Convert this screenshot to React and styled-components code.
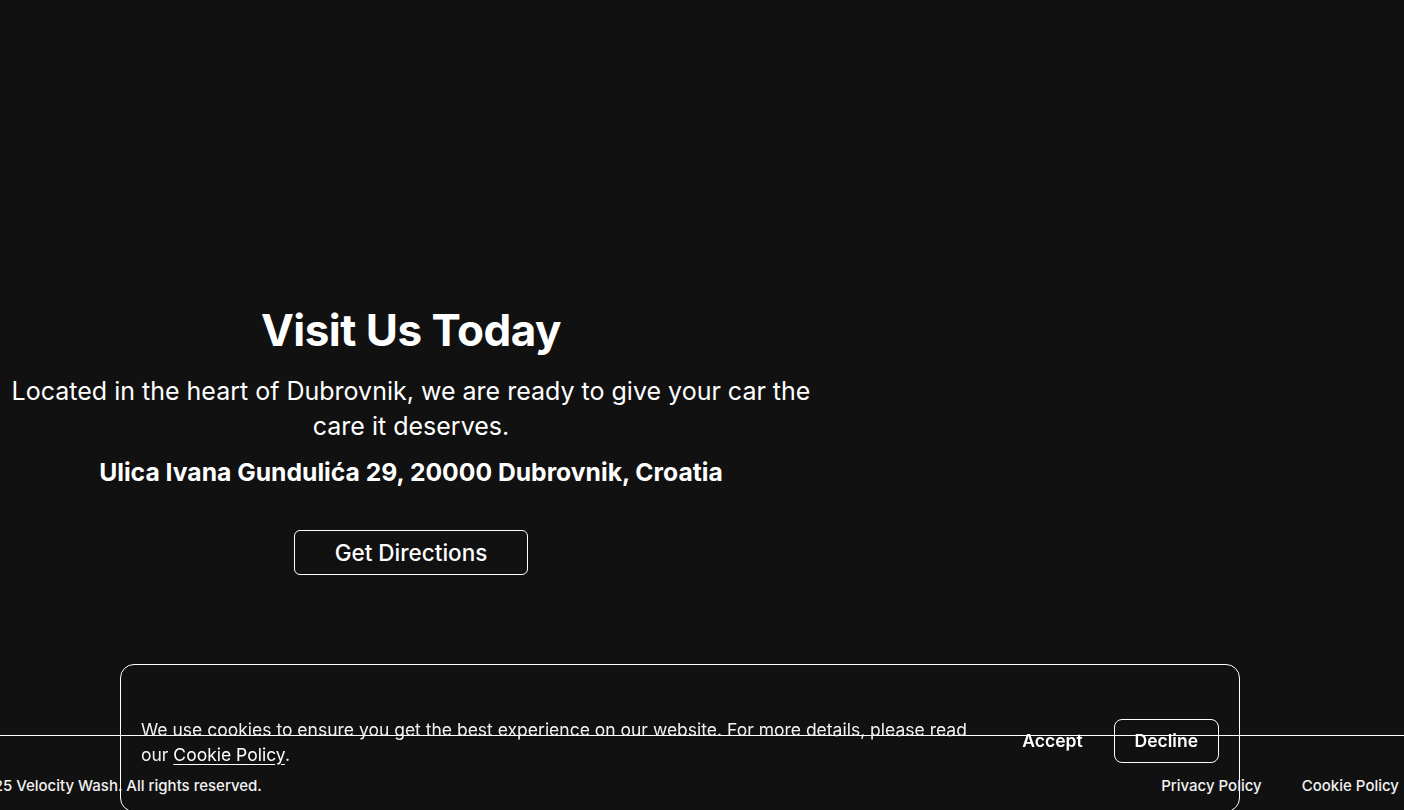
import styled, { createGlobalStyle } from "styled-components";

const GlobalStyle = createGlobalStyle`
  html, body {
    margin: 0;
    padding: 0;
    background: #111111;
    color: #fff;
    font-family: Inter, "Noto Sans", sans-serif;
    overflow: hidden;
  }
  * {
    box-sizing: border-box;
  }
`;

const Location = styled.section`
  display: grid;
  grid-template-columns: 822px 1fr;
  height: 735px;
`;

const Info = styled.div`
  display: flex;
  flex-direction: column;
  align-items: center;
  text-align: center;
  padding-top: 304px;
`;

const Title = styled.h2`
  margin: 0;
  font-size: 44px;
  line-height: 53px;
  font-weight: 700;
  letter-spacing: -0.5px;
`;

const Lead = styled.p`
  margin: 17px 0 0;
  max-width: 812px;
  font-size: 25px;
  line-height: 35px;
  font-weight: 400;
`;

const Address = styled.p`
  margin: 10px 0 0;
  font-size: 24.7px;
  line-height: 36px;
  font-weight: 700;
`;

const OutlineButton = styled.a`
  margin-top: 40px;
  display: inline-block;
  padding: 9px 40px;
  border: 1px solid #fff;
  border-radius: 6px;
  color: #fff;
  font-size: 22.5px;
  line-height: 25px;
  font-weight: 500;
  text-decoration: none;
`;

const Footer = styled.footer`
  border-top: 1px solid #fff;
  display: flex;
  justify-content: space-between;
  align-items: center;
  padding: 39px 5px 40px 0;
  font-size: 15px;
  line-height: 22px;
  font-weight: 500;
  color: #f2f2f2;
`;

const Copyright = styled.span`
  margin-left: -43px;
  white-space: nowrap;
`;

const FooterLinks = styled.nav`
  display: flex;
  gap: 40px;
  a {
    color: #f2f2f2;
    text-decoration: none;
  }
`;

const CookieBanner = styled.div`
  position: fixed;
  left: 120px;
  width: 1120px;
  top: 664px;
  height: 148px;
  border: 1px solid #fff;
  border-radius: 14px;
  display: flex;
  align-items: center;
  gap: 30px;
  padding: 0 20px;
`;

const CookieText = styled.p`
  flex: 1;
  margin: 8px 0 0;
  font-size: 17.5px;
  line-height: 25px;
  color: #f2f2f2;
  a {
    color: #fff;
    text-decoration: underline;
    text-underline-offset: 3px;
  }
`;

const CookieActions = styled.div`
  display: flex;
  gap: 10px;
  align-items: center;
  margin-top: 6px;
`;

const CookieButton = styled.button`
  font-family: inherit;
  font-size: 17.5px;
  line-height: 22px;
  font-weight: 600;
  color: #fff;
  background: transparent;
  padding: 10px 20px;
  border-radius: 8px;
  border: 1px solid ${(props) => (props.$outlined ? "#fff" : "transparent")};
  cursor: pointer;
`;

export default function App() {
  return (
    <>
      <GlobalStyle />
      <Location>
        <Info>
          <Title>Visit Us Today</Title>
          <Lead>
            Located in the heart of Dubrovnik, we are ready to give your car the
            care it deserves.
          </Lead>
          <Address>Ulica Ivana Gundulića 29, 20000 Dubrovnik, Croatia</Address>
          <OutlineButton href="#">Get Directions</OutlineButton>
        </Info>
        <div />
      </Location>
      <Footer>
        <Copyright>© 2025 Velocity Wash. All rights reserved.</Copyright>
        <FooterLinks>
          <a href="#">Privacy Policy</a>
          <a href="#">Cookie Policy</a>
        </FooterLinks>
      </Footer>
      <CookieBanner>
        <CookieText>
          We use cookies to ensure you get the best experience on our website.
          For more details, please read our <a href="#">Cookie Policy</a>.
        </CookieText>
        <CookieActions>
          <CookieButton>Accept</CookieButton>
          <CookieButton $outlined>Decline</CookieButton>
        </CookieActions>
      </CookieBanner>
    </>
  );
}
